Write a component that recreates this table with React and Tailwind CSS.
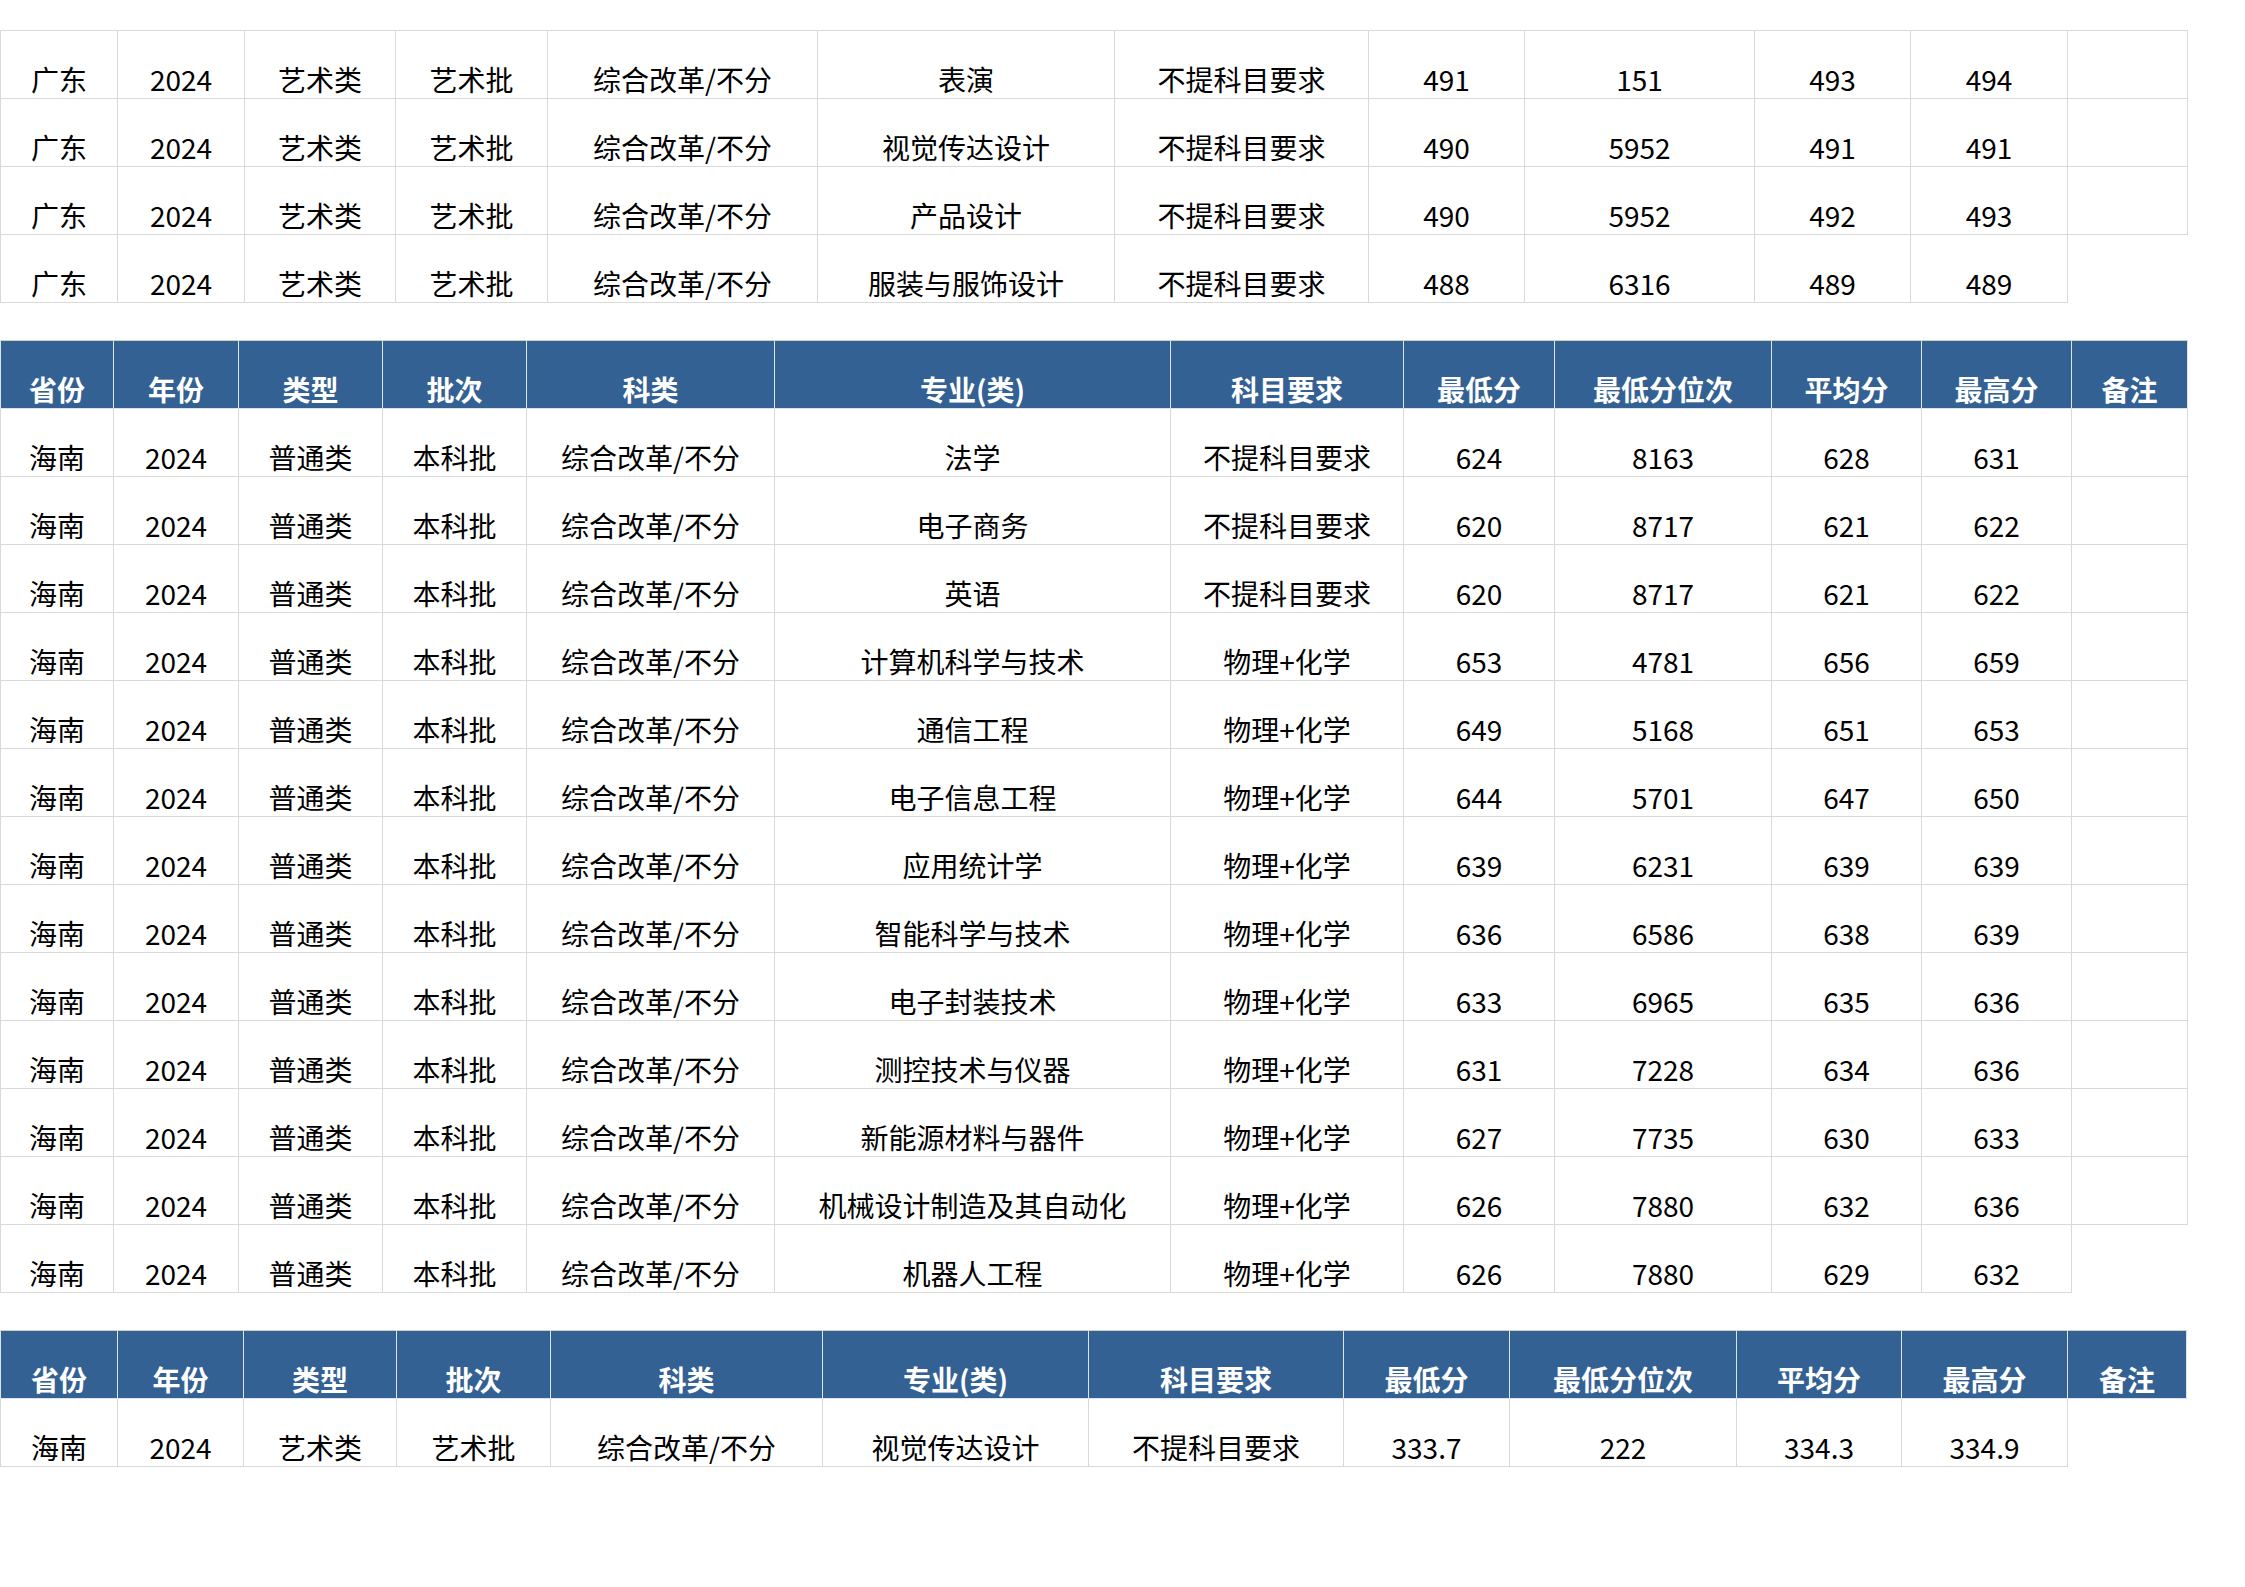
import React from 'react';
import clsx from 'clsx';

// 表头
const HEAD = ['省份', '年份', '类型', '批次', '科类', '专业(类)', '科目要求', '最低分', '最低分位次', '平均分', '最高分', '备注'];

// column widths per table (px, border included)
const W1 = ['w-[118px]', 'w-[127px]', 'w-[151px]', 'w-[152px]', 'w-[270px]', 'w-[297px]', 'w-[254px]', 'w-[156px]', 'w-[230px]', 'w-[156px]', 'w-[157px]', 'w-[120px]'];
const W2 = ['w-[114px]', 'w-[125px]', 'w-[144px]', 'w-[144px]', 'w-[248px]', 'w-[396px]', 'w-[233px]', 'w-[151px]', 'w-[217px]', 'w-[150px]', 'w-[150px]', 'w-[116px]'];
const W3 = ['w-[118px]', 'w-[126px]', 'w-[153px]', 'w-[154px]', 'w-[272px]', 'w-[266px]', 'w-[255px]', 'w-[166px]', 'w-[227px]', 'w-[165px]', 'w-[166px]', 'w-[119px]'];

const ART_GD = ['广东', '2024', '艺术类', '艺术批', '综合改革/不分'];
const HN = ['海南', '2024', '普通类', '本科批', '综合改革/不分'];
const NO_REQ = '不提科目要求';
const PHY = '物理+化学';

const GUANGDONG = [
  [...ART_GD, '表演', NO_REQ, '491', '151', '493', '494', ''],
  [...ART_GD, '视觉传达设计', NO_REQ, '490', '5952', '491', '491', ''],
  [...ART_GD, '产品设计', NO_REQ, '490', '5952', '492', '493', ''],
  [...ART_GD, '服装与服饰设计', NO_REQ, '488', '6316', '489', '489', ''],
];

const HAINAN = [
  [...HN, '法学', NO_REQ, '624', '8163', '628', '631', ''],
  [...HN, '电子商务', NO_REQ, '620', '8717', '621', '622', ''],
  [...HN, '英语', NO_REQ, '620', '8717', '621', '622', ''],
  [...HN, '计算机科学与技术', PHY, '653', '4781', '656', '659', ''],
  [...HN, '通信工程', PHY, '649', '5168', '651', '653', ''],
  [...HN, '电子信息工程', PHY, '644', '5701', '647', '650', ''],
  [...HN, '应用统计学', PHY, '639', '6231', '639', '639', ''],
  [...HN, '智能科学与技术', PHY, '636', '6586', '638', '639', ''],
  [...HN, '电子封装技术', PHY, '633', '6965', '635', '636', ''],
  [...HN, '测控技术与仪器', PHY, '631', '7228', '634', '636', ''],
  [...HN, '新能源材料与器件', PHY, '627', '7735', '630', '633', ''],
  [...HN, '机械设计制造及其自动化', PHY, '626', '7880', '632', '636', ''],
  [...HN, '机器人工程', PHY, '626', '7880', '629', '632', ''],
];

const HAINAN_ART = [
  ['海南', '2024', '艺术类', '艺术批', '综合改革/不分', '视觉传达设计', NO_REQ, '333.7', '222', '334.3', '334.9', ''],
];

function Cell({ w, head, first, bare, children }) {
  return (
    <div
      className={clsx(
        'flex h-[68px] shrink-0 items-end justify-center whitespace-nowrap pb-[3px]',
        w,
        !bare && 'border-r border-b',
        first && 'border-l',
        head ? 'border-[#dde3ea] bg-[#346194] font-bold text-white' : 'border-[#d9d9d9] text-black'
      )}
    >
      {children}
    </div>
  );
}

function Row({ cells, widths, head, last }) {
  return (
    <div className="flex">
      {cells.map((c, i) => (
        <Cell key={i} w={widths[i]} head={head} first={i === 0} bare={last && i === cells.length - 1}>
          {c}
        </Cell>
      ))}
    </div>
  );
}

function Table({ widths, rows, header, className }) {
  return (
    <div className={clsx('flex w-fit flex-col border-t', header ? 'border-[#cfcfcf]' : 'border-[#d9d9d9]', className)}>
      {header && <Row cells={HEAD} widths={widths} head />}
      {rows.map((r, i) => (
        <Row key={i} cells={r} widths={widths} last={i === rows.length - 1} />
      ))}
    </div>
  );
}

export default function App() {
  return (
    <div className="h-[1587px] w-[2245px] bg-white pt-[30px] font-['Noto_Sans_CJK_SC',sans-serif] text-[28px] leading-[32px]">
      <Table widths={W1} rows={GUANGDONG} />
      <Table widths={W2} rows={HAINAN} header className="mt-[37px]" />
      <Table widths={W3} rows={HAINAN_ART} header className="mt-[37px]" />
    </div>
  );
}
